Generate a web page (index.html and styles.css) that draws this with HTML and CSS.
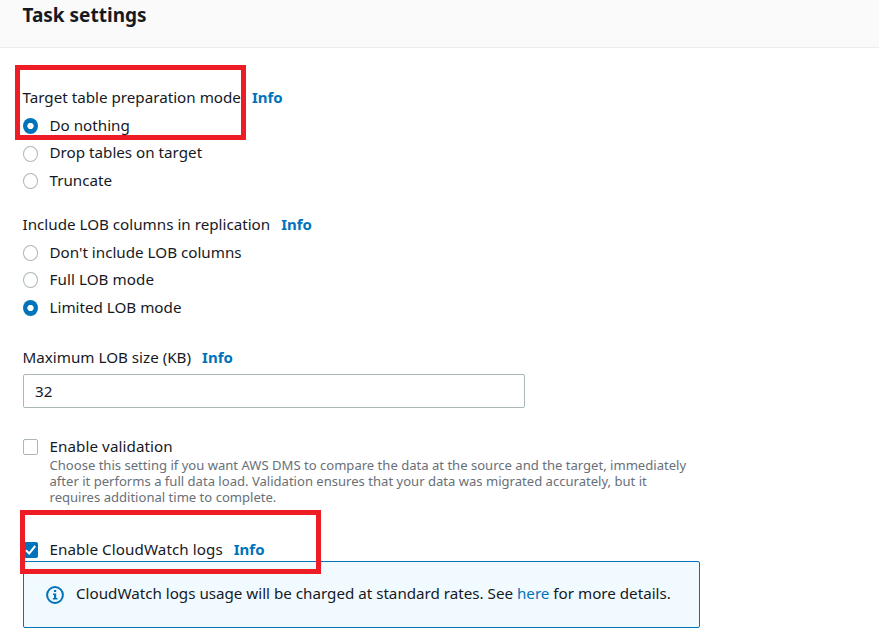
FILE: index.html
```html
<!DOCTYPE html>
<html lang="en">
<head>
<meta charset="utf-8">
<title>Task settings</title>
<link rel="stylesheet" href="styles.css">
</head>
<body>
<header class="header"><h1 class="title">Task settings</h1></header>
<main class="content">
  <section class="group">
    <div class="label"><span class="text">Target table preparation mode</span><a class="info">Info</a></div>
    <div class="option"><span class="radio checked"></span><span class="text">Do nothing</span></div>
    <div class="option"><span class="radio lower"></span><span class="text">Drop tables on target</span></div>
    <div class="option"><span class="radio"></span><span class="text">Truncate</span></div>
  </section>
  <section class="group lob">
    <div class="label"><span class="text">Include LOB columns in replication</span><a class="info">Info</a></div>
    <div class="option"><span class="radio"></span><span class="text">Don't include LOB columns</span></div>
    <div class="option"><span class="radio"></span><span class="text wide">Full LOB mode</span></div>
    <div class="option"><span class="radio checked"></span><span class="text">Limited LOB mode</span></div>
  </section>
  <section class="size">
    <div class="label"><span class="text">Maximum LOB size (KB)</span><a class="info">Info</a></div>
    <div class="input">32</div>
  </section>
  <section class="validation">
    <div class="check-row"><span class="checkbox"></span><span class="text wide">Enable validation</span></div>
    <p class="help"><span>Choose this setting if you want AWS DMS to compare the data at the source and the target, immediately</span><span>after it performs a full data load. Validation ensures that your data was migrated accurately, but it</span><span>requires additional time to complete.</span></p>
  </section>
  <section class="logs">
    <div class="check-row"><span class="checkbox on"><svg viewBox="0 0 15 16" width="15" height="16"><path d="M3 8.2 6.2 11.4 12.2 4" fill="none" stroke="#fff" stroke-width="2"/></svg></span><span class="text wide">Enable CloudWatch logs</span><a class="info">Info</a></div>
    <div class="notice">
      <svg class="notice-icon" viewBox="0 0 18 18" width="18" height="18"><circle cx="9" cy="9" r="7.9" fill="none" stroke="#0073bb" stroke-width="2"/><path d="M8 4h2.2v2H8zM7 7.5h3.2v4.6h1.3v1.5H6.8v-1.5H8V9H7z" fill="#0073bb"/></svg>
      <span class="text message">CloudWatch logs usage will be charged at standard rates. See <a class="link">here</a> for more details.</span>
    </div>
  </section>
</main>
<div class="highlight first"></div>
<div class="highlight second"></div>
</body>
</html>
```
FILE: styles.css
```css
* { box-sizing: border-box; }
body {
  margin: 0;
  height: 639px;
  overflow: hidden;
  position: relative;
  background: #fff;
  color: #16191f;
  font: 15.2px/22px "Noto Sans", sans-serif;
  white-space: nowrap;
}
.header { height: 48px; padding: 4px 22.5px 0; background: #fafafa; border-bottom: 1px solid #eaeded; }
.title { margin: 0; font-size: 19px; line-height: 22px; font-weight: 700; }
.content { padding: 36px 23px 0; }
.label { display: flex; align-items: center; height: 28px; }
.text, .label .info, .check-row .info { padding-bottom: 2px; }
.label .text { margin-left: -0.5px; }
.wide { letter-spacing: 0.07px; }
.info { margin-left: 11px; font-size: 15px; color: #0073bb; font-weight: 700; }
.option { display: flex; align-items: center; height: 27.5px; }
.option .text, .check-row .text { margin-left: -0.5px; }
.radio { width: 15px; height: 16px; margin-right: 12px; border: 1px solid #aab7b8; border-radius: 50%; background: #fff; flex: none; }
.radio.lower { margin-top: 1px; }
.radio.checked { border: 0; background: radial-gradient(circle at center, #fff 2.8px, #0073bb 3.5px); }
.lob { margin-top: 16.5px; }
.size { margin-top: 22.5px; }
.input { width: 502px; height: 34px; margin-top: 2px; padding: 5px 11px; border: 1px solid #aab7b8; border-radius: 2px; }
.validation { margin-top: 28px; }
.check-row { display: flex; align-items: center; height: 22px; }
.checkbox { display: flex; width: 15px; height: 16px; margin-right: 12px; border: 1px solid #aab7b8; border-radius: 2px; flex: none; }
.checkbox.on { border: 0; background: #0073bb; }
.help { margin: -1px 0 0 26.5px; color: #687078; font-size: 13.07px; line-height: 16px; }
.help span { display: block; }
.logs { margin-top: 34px; }
.notice { display: flex; align-items: center; width: 677px; height: 67px; padding: 0 22px; background: #f1faff; border: 1px solid #0073bb; border-radius: 2px; }
.notice-icon { margin-right: 12px; flex: none; }
.message { padding-bottom: 3px; letter-spacing: -0.01px; }
.link { color: #0073bb; }
.highlight { position: absolute; border: 5px solid #ee1c25; }
.first { left: 15px; top: 65px; width: 231px; height: 75px; }
.second { left: 20px; top: 510px; width: 301px; height: 64px; }
```
